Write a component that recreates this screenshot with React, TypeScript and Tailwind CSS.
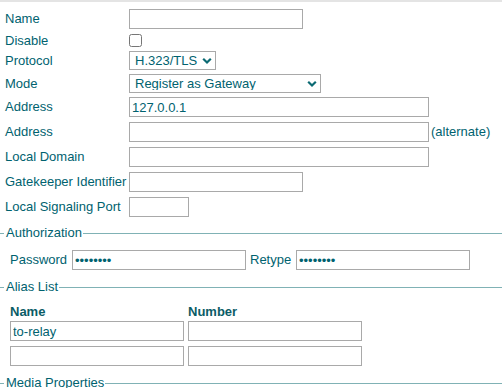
import { ReactNode } from 'react';

const font = { fontFamily: '"Liberation Sans", Arial, sans-serif' };

function TextBox({ w, value = '', type = 'text' }: { w: string; value?: string; type?: string }) {
  return (
    <input
      type={type}
      defaultValue={value}
      className={`${w} h-[20px] shrink-0 border border-[#a9a9a9] bg-white px-[2px] text-[13px] text-[#00626f] outline-none`}
    />
  );
}

function Chevron() {
  return (
    <svg width="10" height="7" viewBox="0 0 10 7" className="pointer-events-none absolute right-[4px] top-1/2 -translate-y-1/2">
      <path d="M1.2 1.2 L5 5 L8.8 1.2" fill="none" stroke="#0b6a73" strokeWidth="2.2" />
    </svg>
  );
}

function Select({ w, value }: { w: string; value: string }) {
  return (
    <div className={`relative ${w} h-[19px] shrink-0`}>
      <select
        defaultValue={value}
        className="h-full w-full appearance-none border border-[#a9a9a9] bg-white pl-[5px] text-[13px] leading-none text-[#00626f] outline-none"
      >
        <option>{value}</option>
      </select>
      <Chevron />
    </div>
  );
}

function Row({ label, mt, h = 'h-[20px]', children }: { label: string; mt: string; h?: string; children: ReactNode }) {
  return (
    <div className={`flex items-center pl-[5px] ${mt} ${h}`}>
      <span className="w-[124px] shrink-0 whitespace-nowrap">{label}</span>
      {children}
    </div>
  );
}

function Legend({ title, mt }: { title: string; mt: string }) {
  return (
    <div className={`flex h-[16px] items-center ${mt}`}>
      <div className="h-px w-[4px] bg-[#80b2b5]" />
      <span className="ml-[2px] mr-[1px] whitespace-nowrap">{title}</span>
      <div className="h-px flex-1 bg-[#80b2b5]" />
    </div>
  );
}

export default function App() {
  return (
    <div className="h-[388px] w-[502px] overflow-hidden bg-white text-[13px] text-[#00626f]" style={font}>
      <div className="h-[2px] bg-[#e4e4e4]" />

      <Row label="Name" mt="mt-[7px]">
        <TextBox w="w-[174px]" />
      </Row>
      <Row label="Disable" mt="mt-[1px]" h="h-[21px]">
        <input type="checkbox" className="m-0 h-[13px] w-[13px]" />
      </Row>
      <Row label="Protocol" mt="mt-0" h="h-[19px]">
        <Select w="w-[87px]" value="H.323/TLS" />
      </Row>
      <Row label="Mode" mt="mt-[4px]" h="h-[19px]">
        <Select w="w-[192px]" value="Register as Gateway" />
      </Row>
      <Row label="Address" mt="mt-[4px]">
        <TextBox w="w-[300px]" value="127.0.0.1" />
      </Row>
      <Row label="Address" mt="mt-[5px]">
        <TextBox w="w-[300px]" />
        <span className="ml-[2px] whitespace-nowrap">(alternate)</span>
      </Row>
      <Row label="Local Domain" mt="mt-[5px]">
        <TextBox w="w-[300px]" />
      </Row>
      <Row label="Gatekeeper Identifier" mt="mt-[5px]">
        <TextBox w="w-[174px]" />
      </Row>
      <Row label="Local Signaling Port" mt="mt-[5px]">
        <TextBox w="w-[60px]" />
      </Row>

      <Legend title="Authorization" mt="mt-[8px]" />
      <div className="mt-[9px] flex h-[20px] items-center pl-[10px]">
        <span className="w-[62px] shrink-0">Password</span>
        <TextBox w="w-[174px]" type="password" value="12345678" />
        <span className="ml-[4px] w-[46px] shrink-0">Retype</span>
        <TextBox w="w-[174px]" type="password" value="12345678" />
      </div>

      <Legend title="Alias List" mt="mt-[9px]" />
      <div className="mt-[7px] grid h-[16px] grid-cols-[174px_174px] items-center gap-x-[4px] pl-[10px] font-bold text-[#0b5c66]">
        <span>Name</span>
        <span>Number</span>
      </div>
      <div className="mt-[3px] grid grid-cols-[174px_174px] gap-x-[4px] pl-[10px]">
        <TextBox w="w-[174px]" value="to-relay" />
        <TextBox w="w-[174px]" />
      </div>
      <div className="mt-[5px] grid grid-cols-[174px_174px] gap-x-[4px] pl-[10px]">
        <TextBox w="w-[174px]" />
        <TextBox w="w-[174px]" />
      </div>

      <Legend title="Media Properties" mt="mt-[9px]" />
    </div>
  );
}
